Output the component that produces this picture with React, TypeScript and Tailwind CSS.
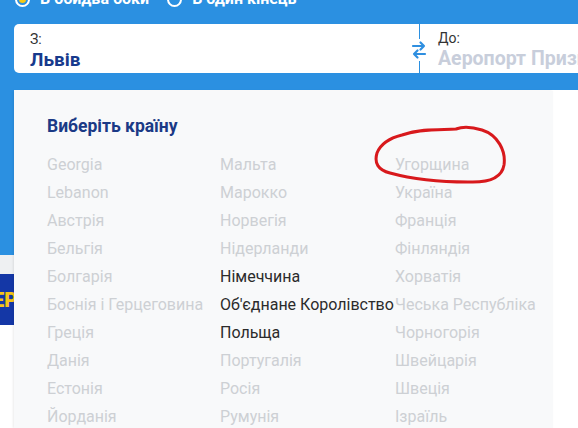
import React from 'react';

const columns: { name: string; active?: boolean }[][] = [
  [
    { name: 'Georgia' },
    { name: 'Lebanon' },
    { name: 'Австрія' },
    { name: 'Бельгія' },
    { name: 'Болгарія' },
    { name: 'Боснія і Герцеговина' },
    { name: 'Греція' },
    { name: 'Данія' },
    { name: 'Естонія' },
    { name: 'Йорданія' },
  ],
  [
    { name: 'Мальта' },
    { name: 'Марокко' },
    { name: 'Норвегія' },
    { name: 'Нідерланди' },
    { name: 'Німеччина', active: true },
    { name: "Об'єднане Королівство", active: true },
    { name: 'Польща', active: true },
    { name: 'Португалія' },
    { name: 'Росія' },
    { name: 'Румунія' },
  ],
  [
    { name: 'Угорщина' },
    { name: 'Україна' },
    { name: 'Франція' },
    { name: 'Фінляндія' },
    { name: 'Хорватія' },
    { name: 'Чеська Республіка' },
    { name: 'Чорногорія' },
    { name: 'Швейцарія' },
    { name: 'Швеція' },
    { name: 'Ізраїль' },
  ],
];

function SwapIcon() {
  return (
    <svg width="16" height="20" viewBox="0 0 16 20" fill="none" stroke="#2f8fe0" strokeWidth="2.2" strokeLinecap="round" strokeLinejoin="round">
      <path d="M2 6h11M9.5 2.5L13 6l-3.5 3.5" />
      <path d="M14 14H3M6.5 10.5L3 14l3.5 3.5" />
    </svg>
  );
}

function Radio({ checked, label }: { checked?: boolean; label: string }) {
  return (
    <div className="flex items-center gap-[10px]">
      <span className="flex h-[15px] w-[15px] items-center justify-center rounded-full border-2 border-white">
        {checked && <span className="h-[7px] w-[7px] rounded-full bg-[#f6c915]" />}
      </span>
      <span className="text-[16px] font-bold text-white">{label}</span>
    </div>
  );
}

export default function App() {
  return (
    <div className="relative h-[428px] w-[578px] overflow-hidden bg-white" style={{ fontFamily: 'Roboto, "Noto Sans", sans-serif' }}>
      {/* header */}
      <div className="bg-[#2b90e1] pb-[17px]">
        <div className="-mt-[13px] flex h-[24px] items-center gap-[18px] pl-[15px]">
          <Radio checked label="В обидва боки" />
          <Radio label="В один кінець" />
        </div>
        <div className="ml-[14px] mt-[13px] flex h-[49px] rounded-l-[5px] bg-white">
          <div className="w-[405px] pl-[16px] pt-[6px]">
            <div className="text-[14px] leading-[18px] text-[#333]">З:</div>
            <div className="text-[19px] font-bold leading-[24px] text-[#173a8c]">Львів</div>
          </div>
          <div className="relative w-px bg-[#2b90e1]">
            <div className="absolute left-[-8px] top-[15px] bg-white py-[1px]">
              <SwapIcon />
            </div>
          </div>
          <div className="min-w-0 flex-1 overflow-hidden whitespace-nowrap pl-[18px] pt-[5px]">
            <div className="text-[14px] leading-[18px] text-[#333]">До:</div>
            <div className="text-[19.5px] font-bold leading-[24px] text-[#c8cedb]">Аеропорт Призначення</div>
          </div>
        </div>
      </div>

      {/* page content under the dropdown */}
      <div className="h-[165px] w-[14px] bg-[#2b90e1]" />
      <div className="h-[19px] w-[14px] bg-[#eef0f2]" />
      <div className="flex h-[51px] w-[14px] items-center overflow-hidden bg-[#1437a6]">
        <span className="-ml-[7px] bg-[#1437a6] text-[20px] font-black leading-none text-[#f5c417]">ЕР</span>
      </div>

      {/* dropdown */}
      <div className="absolute bottom-0 left-[14px] top-[91px] w-[539px] bg-[#f8f9fa] pl-[33px] pt-[23px] shadow-[-1px_0_2px_rgba(0,0,0,0.08)]">
        <h2 className="text-[17.5px] font-bold leading-[24px] text-[#1b3a86]">Виберіть країну</h2>
        <div className="mt-[13px] grid grid-cols-[173px_175px_1fr]">
          {columns.map((col, i) => (
            <div key={i} className="flex flex-col">
              {col.map((c) => (
                <div
                  key={c.name}
                  className={`whitespace-nowrap text-[16px] leading-[28px] ${c.active ? 'text-[#2b2b2b]' : 'text-[#cdd0d4]'}`}
                >
                  {c.name}
                </div>
              ))}
            </div>
          ))}
        </div>
      </div>

      {/* red annotation */}
      <svg className="pointer-events-none absolute left-[372px] top-[125px]" width="136" height="62" viewBox="0 0 136 62" fill="none">
        <path
          d="M30 10 C 50 3, 70 5, 84 4 C 92 1, 100 2, 110 5 C 126 10, 134 26, 132 40 C 130 52, 118 58, 96 57 C 70 57, 40 54, 18 48 C 6 45, 2 38, 5 28 C 9 18, 18 13, 30 10 Z"
          stroke="#d8191c"
          strokeWidth="3"
          strokeLinecap="round"
        />
      </svg>
    </div>
  );
}
